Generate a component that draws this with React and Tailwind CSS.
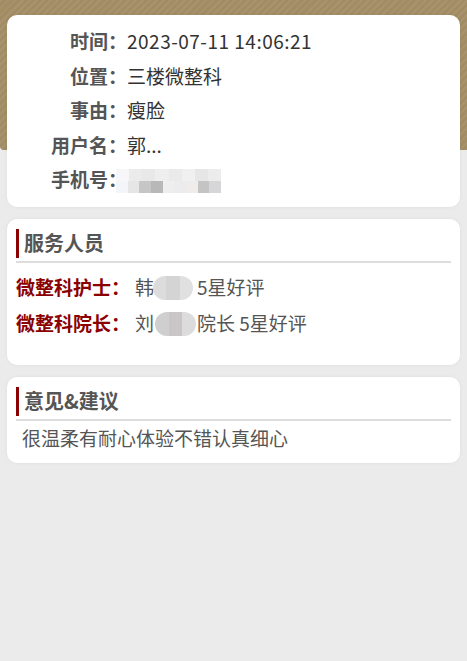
import React from "react";

const font = { fontFamily: '"Noto Sans CJK SC", "Noto Sans", sans-serif' };

const Blur = ({ w, cells }) => (
  <span className={`inline-flex overflow-hidden ${w}`}>
    {cells.map((c, i) => (
      <span key={i} className="flex-1 h-full" style={{ background: c }} />
    ))}
  </span>
);

const InfoRow = ({ label, children }) => (
  <div className="flex items-center h-[34.5px]">
    <div className="w-[120px] text-right font-bold text-[#555]">{label}</div>
    <div className="text-[#333]">{children}</div>
  </div>
);

const SectionTitle = ({ children }) => (
  <div className="border-b-2 border-[#dddddd] pb-[3px]">
    <div className="border-l-[3px] border-[#8b0000] pl-[5px] h-[29px] flex items-center text-[20px] font-bold text-[#555]">
      {children}
    </div>
  </div>
);

const Masked = ({ w, cells }) => (
  <span className={`inline-flex h-[24px] rounded-[12px] overflow-hidden ${w}`}>
    {cells.map((c, i) => (
      <span key={i} className="flex-1" style={{ background: c }} />
    ))}
  </span>
);

export default function App() {
  return (
    <div className="relative min-h-[661px] bg-[#ebebeb] text-[19px]" style={font}>
      <div className="absolute inset-x-0 top-0 h-[150px] rounded-bl-[4px] bg-[#a28c64] bg-[repeating-linear-gradient(135deg,rgba(255,255,255,0.06)_0px,rgba(255,255,255,0.06)_2px,transparent_2px,transparent_5px)]" />
      <div className="relative flex flex-col gap-3 px-[7px] pt-[15px]">
        <div className="bg-white rounded-[10px] pt-[9px] pb-[10px] shadow-[0_0_4px_rgba(0,0,0,0.05)]">
          <InfoRow label="时间：">
            <span className="tracking-[0.5px]">2023-07-11 14:06:21</span>
          </InfoRow>
          <InfoRow label="位置：">三楼微整科</InfoRow>
          <InfoRow label="事由：">瘦脸</InfoRow>
          <InfoRow label="用户名：">郭...</InfoRow>
          <InfoRow label="手机号：">
            <span className="-ml-[11px] flex flex-col w-[105px] h-[24px] mt-[3px]">
              <Blur w="w-full h-[12px]" cells={["#f7f7f9", "#ebebeb", "#e8e8e8", "#eeeeee", "#eaeaea", "#f0f0f0", "#e6e6e6", "#ececec"]} />
              <Blur w="w-full h-[12px]" cells={["#f3f5f9", "#e6e6e6", "#c6c6c6", "#b8b8b8", "#eeeeee", "#ececee", "#efeceb", "#c4c4c4", "#d6d6d8"]} />
            </span>
          </InfoRow>
        </div>

        <div className="bg-white rounded-[10px] px-[9px] pt-[10px] pb-[26px] shadow-[0_0_4px_rgba(0,0,0,0.05)]">
          <SectionTitle>服务人员</SectionTitle>
          <div className="flex items-center h-[30px] mt-[10px]">
            <span className="w-[119px] font-bold text-[#8b0000]">微整科护士：</span>
            <span className="text-[#555] flex items-center">
              韩
              <Masked w="w-[40px] -ml-[1px] mr-[4px]" cells={["#dcdcdc", "#d4d4d4", "#e0e0e0"]} />
              5星好评
            </span>
          </div>
          <div className="flex items-center h-[30px] mt-[6px]">
            <span className="w-[119px] font-bold text-[#8b0000]">微整科院长：</span>
            <span className="text-[#555] flex items-center">
              刘
              <Masked w="w-[41px] ml-[1px] mr-[1px]" cells={["#cfcfcf", "#c8c6c7", "#dddcdc"]} />
              院长 5星好评
            </span>
          </div>
        </div>

        <div className="bg-white rounded-[10px] px-[9px] pt-[10px] pb-[12px] shadow-[0_0_4px_rgba(0,0,0,0.05)]">
          <SectionTitle>意见&amp;建议</SectionTitle>
          <div className="pl-[6px] pt-[4px] text-[#555] leading-[26px]">很温柔有耐心体验不错认真细心</div>
        </div>
      </div>
    </div>
  );
}
